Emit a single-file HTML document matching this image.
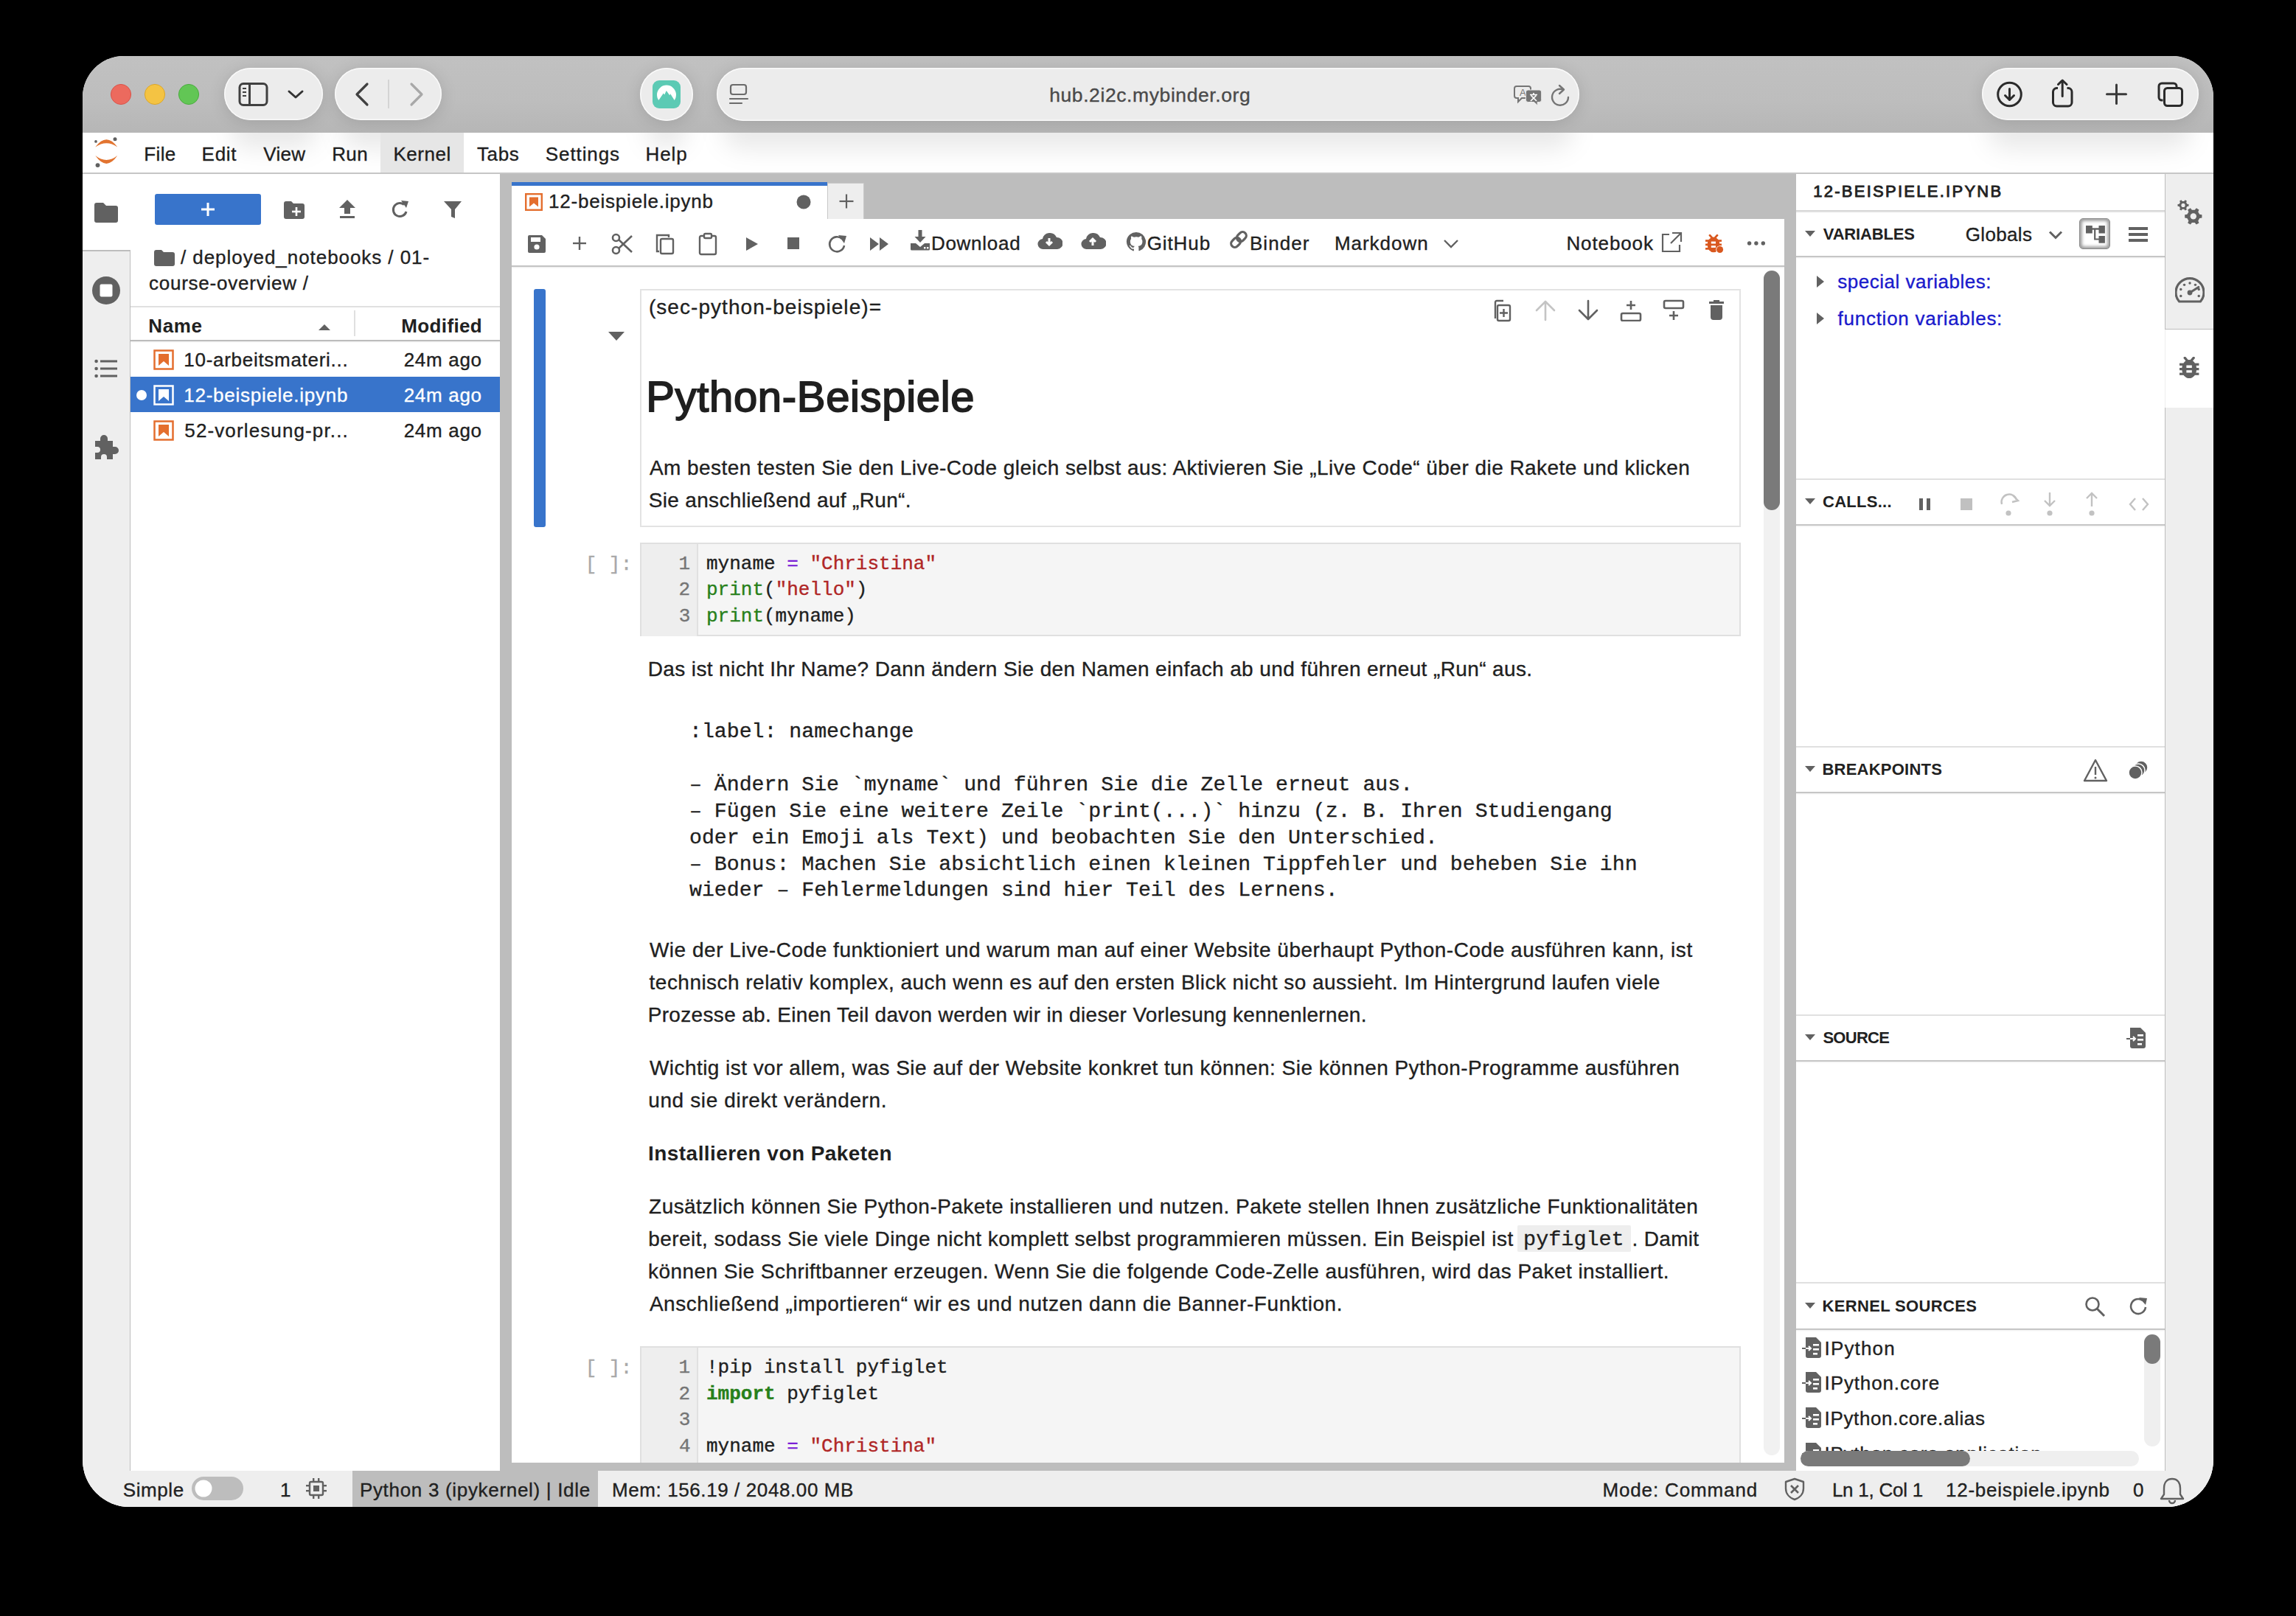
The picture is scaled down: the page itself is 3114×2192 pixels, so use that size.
<!DOCTYPE html><html><head><meta charset="utf-8"><style>
html,body{margin:0;padding:0;}
body{width:3114px;height:2192px;background:#000;position:relative;overflow:hidden;font-family:"Liberation Sans",sans-serif;}
.t{position:absolute;white-space:pre;-webkit-text-stroke:0.35px currentColor;}
.r{position:absolute;display:block;}
#win{position:absolute;left:0;top:0;width:3114px;height:2192px;clip-path:inset(76px 112px 148px 112px round 56px 56px 64px 64px);background:#fff;}
</style></head><body><div id="win"><div class="r" style="left:112px;top:76px;width:2890px;height:104px;background:linear-gradient(180deg,#c1c1c1 0%,#bdbdbd 60%,#b6b6b6 100%);"></div><svg class="r" style="left:149px;top:113px;" width="30" height="30" viewBox="0 0 30 30"><circle cx="15" cy="15" r="13.6" fill="#ec6a5e" stroke="#d9534a" stroke-width="1"/></svg><svg class="r" style="left:195px;top:113px;" width="30" height="30" viewBox="0 0 30 30"><circle cx="15" cy="15" r="13.6" fill="#f4c343" stroke="#dba629" stroke-width="1"/></svg><svg class="r" style="left:241px;top:113px;" width="30" height="30" viewBox="0 0 30 30"><circle cx="15" cy="15" r="13.6" fill="#62c655" stroke="#4aac3e" stroke-width="1"/></svg><div class="r" style="left:304px;top:92px;width:134px;height:71px;background:none;background:#ececec;border-radius:36px;box-shadow:0 0 0 1.5px rgba(255,255,255,0.75) inset, 0 3px 22px rgba(0,0,0,0.13);"></div><div class="r" style="left:454px;top:92px;width:145px;height:71px;background:none;background:#ececec;border-radius:36px;box-shadow:0 0 0 1.5px rgba(255,255,255,0.75) inset, 0 3px 22px rgba(0,0,0,0.13);"></div><div class="r" style="left:868px;top:92px;width:72px;height:72px;background:none;background:#ececec;border-radius:36px;box-shadow:0 0 0 1.5px rgba(255,255,255,0.75) inset, 0 3px 22px rgba(0,0,0,0.13);border-radius:50%;"></div><div class="r" style="left:972px;top:92px;width:1170px;height:72px;background:none;background:#ececec;border-radius:36px;box-shadow:0 0 0 1.5px rgba(255,255,255,0.75) inset, 0 3px 22px rgba(0,0,0,0.13);"></div><div class="r" style="left:2688px;top:92px;width:294px;height:71px;background:none;background:#ececec;border-radius:36px;box-shadow:0 0 0 1.5px rgba(255,255,255,0.75) inset, 0 3px 22px rgba(0,0,0,0.13);"></div><svg class="r" style="left:322px;top:111px;" width="42" height="34" viewBox="0 0 42 34"><rect x="3" y="2.5" width="37" height="29" rx="5" fill="none" stroke="#404040" stroke-width="3"/><line x1="16.5" y1="3" x2="16.5" y2="31" stroke="#404040" stroke-width="3"/><line x1="7" y1="9" x2="12" y2="9" stroke="#404040" stroke-width="2"/><line x1="7" y1="14" x2="12" y2="14" stroke="#404040" stroke-width="2"/><line x1="7" y1="19" x2="12" y2="19" stroke="#404040" stroke-width="2"/></svg><svg class="r" style="left:388px;top:119px;" width="26" height="18" viewBox="0 0 26 18"><polyline points="4,5 13,13 22,5" fill="none" stroke="#333" stroke-width="3" stroke-linecap="round" stroke-linejoin="round"/></svg><svg class="r" style="left:476px;top:110px;" width="30" height="36" viewBox="0 0 30 36"><polyline points="22,4 8,18 22,32" fill="none" stroke="#404040" stroke-width="3.2" stroke-linecap="round" stroke-linejoin="round"/></svg><div class="r" style="left:526px;top:108px;width:2px;height:39px;background:#d4d4d4;"></div><svg class="r" style="left:550px;top:110px;" width="30" height="36" viewBox="0 0 30 36"><polyline points="8,4 22,18 8,32" fill="none" stroke="#a8a8a8" stroke-width="3.2" stroke-linecap="round" stroke-linejoin="round"/></svg><svg class="r" style="left:884px;top:108px;" width="40" height="40" viewBox="0 0 40 40"><rect x="1" y="1" width="38" height="38" rx="9" fill="#5ccab4"/><path d="M9.3 28 A13 13 0 1 1 30.7 28 L25.2 19.2 L24.2 21.2 L19.8 15 L17.2 20.6 L15.8 18.6 Z" fill="#fff"/></svg><svg class="r" style="left:988px;top:113px;" width="28" height="30" viewBox="0 0 28 30"><rect x="3" y="2" width="21" height="13" rx="3" fill="none" stroke="#6b6b6b" stroke-width="2.2"/><line x1="2" y1="21" x2="26" y2="21" stroke="#6b6b6b" stroke-width="2.2" stroke-linecap="round"/><line x1="2" y1="27" x2="18" y2="27" stroke="#6b6b6b" stroke-width="2.2" stroke-linecap="round"/></svg><span id="t1" class="t " style="left:1423.2px;top:116.1px;font-size:26.5px;line-height:26.5px;color:#4a4a4a;letter-spacing:0.590px;">hub.2i2c.mybinder.org</span><svg class="r" style="left:2053px;top:114px;" width="46" height="36" viewBox="0 0 46 36"><path d="M4 3 h16 a3 3 0 0 1 3 3 v10 a3 3 0 0 1 -3 3 h-9 l-5 5 v-5 h-2 a3 3 0 0 1 -3 -3 v-10 a3 3 0 0 1 3 -3z" fill="none" stroke="#757575" stroke-width="2"/><text x="8" y="16" font-size="13" fill="#757575" font-family="Liberation Sans">A</text><path d="M19.4 8 h15.3 a3 3 0 0 1 3 3 v10.5 a3 3 0 0 1 -3 3 h-2.5 v4.5 l-4.5 -4.5 h-8.3 a3 3 0 0 1 -3 -3 v-10.5 a3 3 0 0 1 3 -3z" fill="#757575" stroke="#ececec" stroke-width="1"/><path d="M22 14.5 H32 M27 12 V14 M23.5 15.5 L31 23 M30.5 15.5 L23 23" stroke="#fff" stroke-width="1.7" fill="none"/></svg><svg class="r" style="left:2101px;top:112px;" width="32" height="38" viewBox="0 0 32 38"><path d="M26 20 A11 11 0 1 1 19 9.5" fill="none" stroke="#757575" stroke-width="2.4" stroke-linecap="round"/><polyline points="14,4 20,9.5 14,15" fill="none" stroke="#757575" stroke-width="2.4" stroke-linecap="round" stroke-linejoin="round"/></svg><svg class="r" style="left:2707px;top:110px;" width="38" height="38" viewBox="0 0 38 38"><circle cx="18.5" cy="18" r="15.8" fill="none" stroke="#2b2b2b" stroke-width="3"/><line x1="18.5" y1="10.5" x2="18.5" y2="25" stroke="#2b2b2b" stroke-width="3" stroke-linecap="round"/><polyline points="12.5,19.5 18.5,25.5 24.5,19.5" fill="none" stroke="#2b2b2b" stroke-width="3" stroke-linecap="round" stroke-linejoin="round"/></svg><svg class="r" style="left:2780px;top:106px;" width="34" height="42" viewBox="0 0 34 42"><path d="M11 13.5 H9.5 a5 5 0 0 0 -5 5 V33 a5 5 0 0 0 5 5 H25 a5 5 0 0 0 5 -5 V18.5 a5 5 0 0 0 -5 -5 H23.5" fill="none" stroke="#2b2b2b" stroke-width="3"/><line x1="17.2" y1="3.5" x2="17.2" y2="24.5" stroke="#2b2b2b" stroke-width="3" stroke-linecap="round"/><polyline points="11.5,8.5 17.2,3 23,8.5" fill="none" stroke="#2b2b2b" stroke-width="3" stroke-linecap="round" stroke-linejoin="round"/></svg><svg class="r" style="left:2855px;top:112px;" width="32" height="32" viewBox="0 0 32 32"><line x1="15.5" y1="3" x2="15.5" y2="28.5" stroke="#3a3a3a" stroke-width="3" stroke-linecap="round"/><line x1="2.5" y1="15.8" x2="28.5" y2="15.8" stroke="#3a3a3a" stroke-width="3" stroke-linecap="round"/></svg><svg class="r" style="left:2924px;top:109px;" width="40" height="38" viewBox="0 0 40 38"><path d="M9.5 27 h-1.5 a4 4 0 0 1 -4 -4 v-15 a4 4 0 0 1 4 -4 h16 a4 4 0 0 1 4 4 v1" fill="none" stroke="#2b2b2b" stroke-width="3"/><rect x="11.5" y="10.5" width="24" height="24" rx="4" fill="none" stroke="#2b2b2b" stroke-width="3"/></svg><div class="r" style="left:112px;top:180px;width:2890px;height:55px;background:#fff;overflow:hidden;"><div class="r" style="left:200px;top:-30px;width:118px;height:52px;background:rgba(0,0,0,0.085);filter:blur(16px);border-radius:30px;"></div><div class="r" style="left:350px;top:-30px;width:129px;height:52px;background:rgba(0,0,0,0.085);filter:blur(16px);border-radius:30px;"></div><div class="r" style="left:764px;top:-30px;width:56px;height:52px;background:rgba(0,0,0,0.085);filter:blur(16px);border-radius:30px;"></div><div class="r" style="left:868px;top:-30px;width:1154px;height:52px;background:rgba(0,0,0,0.085);filter:blur(16px);border-radius:30px;"></div><div class="r" style="left:2584px;top:-30px;width:276px;height:52px;background:rgba(0,0,0,0.085);filter:blur(16px);border-radius:30px;"></div></div><div class="r" style="left:516px;top:180px;width:113px;height:54px;background:#e6e6e6;"></div><div class="r" style="left:112px;top:234px;width:2890px;height:2px;background:#c6c6c6;"></div><svg class="r" style="left:124px;top:184px;" width="40" height="46" viewBox="0 0 40 46"><path d="M5.3 15.6 Q20.4 -5 35.3 15.6 Q20.4 4.8 5.3 15.6Z" fill="#e27430"/><path d="M5.3 27.1 Q20.4 48.7 35.3 27.1 Q20.4 38.9 5.3 27.1Z" fill="#e27430"/><circle cx="32" cy="4.65" r="2.5" fill="#616161"/><circle cx="6" cy="7.9" r="1.85" fill="#616161"/><circle cx="8.5" cy="40.1" r="2.94" fill="#616161"/></svg><span id="t2" class="t " style="left:195.3px;top:196.0px;font-size:26px;line-height:26px;color:#1e1e1e;letter-spacing:0.361px;">File</span><span id="t3" class="t " style="left:273.6px;top:196.0px;font-size:26px;line-height:26px;color:#1e1e1e;letter-spacing:0.704px;">Edit</span><span id="t4" class="t " style="left:357.3px;top:196.0px;font-size:26px;line-height:26px;color:#1e1e1e;letter-spacing:0.320px;">View</span><span id="t5" class="t " style="left:450.2px;top:196.0px;font-size:26px;line-height:26px;color:#1e1e1e;letter-spacing:0.409px;">Run</span><span id="t6" class="t " style="left:533.4px;top:196.0px;font-size:26px;line-height:26px;color:#1e1e1e;letter-spacing:0.543px;">Kernel</span><span id="t7" class="t " style="left:646.9px;top:196.0px;font-size:26px;line-height:26px;color:#1e1e1e;letter-spacing:0.667px;">Tabs</span><span id="t8" class="t " style="left:739.8px;top:196.0px;font-size:26px;line-height:26px;color:#1e1e1e;letter-spacing:0.910px;">Settings</span><span id="t9" class="t " style="left:875.5px;top:196.0px;font-size:26px;line-height:26px;color:#1e1e1e;letter-spacing:0.913px;">Help</span><div class="r" style="left:112px;top:236px;width:2890px;height:1759px;background:#bdbdbd;"></div><div class="r" style="left:112px;top:236px;width:65px;height:1759px;background:#eeeeee;"></div><div class="r" style="left:112px;top:236px;width:65px;height:104px;background:#ffffff;"></div><div class="r" style="left:176px;top:340px;width:2px;height:1655px;background:#bdbdbd;"></div><div class="r" style="left:112px;top:339px;width:65px;height:2px;background:#bdbdbd;"></div><div class="r" style="left:177px;top:236px;width:501px;height:1759px;background:#ffffff;"></div><div class="r" style="left:694px;top:297px;width:1726px;height:1687px;background:#ffffff;"></div><div class="r" style="left:2436px;top:236px;width:500px;height:1759px;background:#ffffff;"></div><div class="r" style="left:2936px;top:236px;width:66px;height:1759px;background:#eeeeee;"></div><div class="r" style="left:2936px;top:236px;width:1px;height:211px;background:#bdbdbd;"></div><div class="r" style="left:2936px;top:553px;width:1px;height:1442px;background:#bdbdbd;"></div><div class="r" style="left:2937px;top:447px;width:65px;height:106px;background:#ffffff;"></div><div class="r" style="left:112px;top:1995px;width:2890px;height:49px;background:#eeeeee;"></div><div class="r" style="left:478px;top:1995px;width:333px;height:49px;background:#bdbdbd;"></div><svg class="r" style="left:126px;top:272px;" width="36" height="32" viewBox="0 0 36 32"><path d="M2 6 a3 3 0 0 1 3 -3 h9 l4 4 h13 a3 3 0 0 1 3 3 v17 a3 3 0 0 1 -3 3 h-26 a3 3 0 0 1 -3 -3z" fill="#616161"/></svg><svg class="r" style="left:124px;top:374px;" width="40" height="40" viewBox="0 0 40 40"><circle cx="20" cy="20" r="19" fill="#616161"/><rect x="11.5" y="11.5" width="17" height="17" rx="2" fill="#fff"/></svg><svg class="r" style="left:126px;top:484px;" width="36" height="32" viewBox="0 0 36 32"><circle cx="4.6" cy="6.0" r="2.3" fill="#616161"/><rect x="10" y="4.5" width="23" height="3" fill="#616161"/><circle cx="4.6" cy="16.0" r="2.3" fill="#616161"/><rect x="10" y="14.5" width="23" height="3" fill="#616161"/><circle cx="4.6" cy="26.0" r="2.3" fill="#616161"/><rect x="10" y="24.5" width="23" height="3" fill="#616161"/></svg><svg class="r" style="left:124px;top:584px;" width="40" height="40" viewBox="0 0 40 40"><path d="M5 14 h7 v-3 a5 5 0 0 1 10 0 v3 h7 v8 h3 a5 5 0 0 1 0 10 h-3 v7 h-8 v-3 a4 4 0 0 0 -8 0 v3 h-8 v-9 h3 a4 4 0 0 0 0 -8 h-3z" fill="#616161"/></svg><div class="r" style="left:210px;top:263px;width:144px;height:42px;background:#3874cb;border-radius:3px;"></div><svg class="r" style="left:268px;top:270px;" width="28" height="28" viewBox="0 0 28 28"><line x1="14" y1="5" x2="14" y2="23" stroke="#fff" stroke-width="3"/><line x1="5" y1="14" x2="23" y2="14" stroke="#fff" stroke-width="3"/></svg><svg class="r" style="left:384px;top:272px;" width="30" height="26" viewBox="0 0 30 26"><path d="M1 4 a3 3 0 0 1 3 -3 h7 l3 3 h12 a3 3 0 0 1 3 3 v15 a3 3 0 0 1 -3 3 h-22 a3 3 0 0 1 -3 -3z" fill="#616161"/><line x1="18" y1="9" x2="18" y2="21" stroke="#fff" stroke-width="2.6"/><line x1="12" y1="15" x2="24" y2="15" stroke="#fff" stroke-width="2.6"/></svg><svg class="r" style="left:458px;top:270px;" width="26" height="28" viewBox="0 0 26 28"><path d="M13 1 L24 12 H17 V20 H9 V12 H2z" fill="#616161"/><rect x="3" y="23" width="20" height="3" fill="#616161"/></svg><svg class="r" style="left:529px;top:270px;" width="28" height="28" viewBox="0 0 28 28"><path d="M22 17 A9 9 0 1 1 19 7.5" fill="none" stroke="#616161" stroke-width="3"/><path d="M15 2 L25 3 L22 12z" fill="#616161"/></svg><svg class="r" style="left:600px;top:270px;" width="28" height="28" viewBox="0 0 28 28"><path d="M2 3 H26 L17 14 V26 L12 24 V14z" fill="#616161"/></svg><svg class="r" style="left:208px;top:338px;" width="30" height="24" viewBox="0 0 30 24"><path d="M1 4 a3 3 0 0 1 3 -3 h7 l3 3 h12 a3 3 0 0 1 3 3 v13 a3 3 0 0 1 -3 3 h-22 a3 3 0 0 1 -3 -3z" fill="#616161"/></svg><span id="t10" class="t " style="left:245.0px;top:336.0px;font-size:26px;line-height:26px;color:#212121;letter-spacing:0.939px;">/ deployed_notebooks / 01-</span><span id="t11" class="t " style="left:201.9px;top:371.0px;font-size:26px;line-height:26px;color:#212121;letter-spacing:0.773px;">course-overview /</span><div class="r" style="left:177px;top:415px;width:501px;height:2px;background:#e0e0e0;"></div><span id="t12" class="t " style="left:201.3px;top:429.0px;font-size:26px;line-height:26px;color:#212121;font-weight:700;-webkit-text-stroke:0;letter-spacing:0.600px;">Name</span><svg class="r" style="left:430px;top:438px;" width="20" height="12" viewBox="0 0 20 12"><path d="M2 10 L10 2 L18 10z" fill="#616161"/></svg><div class="r" style="left:480px;top:421px;width:2px;height:35px;background:#e0e0e0;"></div><span id="t13" class="t " style="left:544.3px;top:429.0px;font-size:26px;line-height:26px;color:#212121;font-weight:700;-webkit-text-stroke:0;letter-spacing:0.368px;">Modified</span><div class="r" style="left:177px;top:461px;width:501px;height:2px;background:#bcbcbc;box-shadow:0 1px 2px rgba(0,0,0,0.08);"></div><svg class="r" style="left:208px;top:474px;" width="28" height="28" viewBox="0 0 28 28"><rect x="1.5" y="1.5" width="25" height="25" fill="none" stroke="#e46e2e" stroke-width="2.5"/><path d="M7 6 H21 V22 L14 16 L7 22z" fill="#e46e2e"/></svg><span id="t14" class="t " style="left:249.3px;top:475.0px;font-size:26px;line-height:26px;color:#212121;letter-spacing:0.712px;">10-arbeitsmateri...</span><span id="t15" class="t " style="left:547.7px;top:475.0px;font-size:26px;line-height:26px;color:#212121;letter-spacing:0.702px;">24m ago</span><div class="r" style="left:177px;top:511px;width:501px;height:48px;background:#3874cb;"></div><svg class="r" style="left:183px;top:527px;" width="18" height="18" viewBox="0 0 18 18"><circle cx="9" cy="9" r="7" fill="#fff"/></svg><svg class="r" style="left:208px;top:522px;" width="28" height="28" viewBox="0 0 28 28"><rect x="1.5" y="1.5" width="25" height="25" fill="none" stroke="#fff" stroke-width="2.5"/><path d="M7 6 H21 V22 L14 16 L7 22z" fill="#fff"/></svg><span id="t16" class="t " style="left:249.3px;top:523.0px;font-size:26px;line-height:26px;color:#ffffff;letter-spacing:0.734px;">12-beispiele.ipynb</span><span id="t17" class="t " style="left:547.7px;top:523.0px;font-size:26px;line-height:26px;color:#ffffff;letter-spacing:0.702px;">24m ago</span><svg class="r" style="left:208px;top:570px;" width="28" height="28" viewBox="0 0 28 28"><rect x="1.5" y="1.5" width="25" height="25" fill="none" stroke="#e46e2e" stroke-width="2.5"/><path d="M7 6 H21 V22 L14 16 L7 22z" fill="#e46e2e"/></svg><span id="t18" class="t " style="left:250.3px;top:571.0px;font-size:26px;line-height:26px;color:#212121;letter-spacing:1.123px;">52-vorlesung-pr...</span><span id="t19" class="t " style="left:547.7px;top:571.0px;font-size:26px;line-height:26px;color:#212121;letter-spacing:0.702px;">24m ago</span><div class="r" style="left:694px;top:247px;width:428px;height:50px;background:#ffffff;"></div><div class="r" style="left:694px;top:247px;width:428px;height:5px;background:#3874cb;"></div><svg class="r" style="left:712px;top:262px;" width="24" height="24" viewBox="0 0 24 24"><rect x="1.2" y="1.2" width="21.6" height="21.6" fill="none" stroke="#e46e2e" stroke-width="2.4"/><path d="M6 5.5 H18 V18.5 L12 13.5 L6 18.5z" fill="#e46e2e"/></svg><span id="t20" class="t " style="left:744.0px;top:260.0px;font-size:26px;line-height:26px;color:#212121;letter-spacing:0.793px;">12-beispiele.ipynb</span><svg class="r" style="left:1080px;top:264px;" width="20" height="20" viewBox="0 0 20 20"><circle cx="10" cy="10" r="9.5" fill="#616161"/></svg><div class="r" style="left:1122px;top:248px;width:50px;height:49px;background:#eeeeee;box-sizing:border-box;border:1.5px solid #c8c8c8;border-bottom:none;"></div><svg class="r" style="left:1138px;top:263px;" width="20" height="20" viewBox="0 0 20 20"><line x1="10" y1="0.5" x2="10" y2="19.5" stroke="#616161" stroke-width="2.2"/><line x1="0.5" y1="10" x2="19.5" y2="10" stroke="#616161" stroke-width="2.2"/></svg><div class="r" style="left:694px;top:297px;width:1726px;height:62px;background:#ffffff;"></div><div class="r" style="left:694px;top:360px;width:1726px;height:2px;background:#c4c4c4;box-shadow:0 1px 2px rgba(0,0,0,0.10);"></div><svg class="r" style="left:714px;top:317px;" width="28" height="28" viewBox="0 0 28 28"><path d="M2 4 a2 2 0 0 1 2 -2 h17 l5 5 v17 a2 2 0 0 1 -2 2 h-20 a2 2 0 0 1 -2 -2z" fill="#616161"/><rect x="6" y="5" width="13" height="6" fill="#fff"/><circle cx="14" cy="18" r="3.6" fill="#fff"/></svg><svg class="r" style="left:776px;top:320px;" width="20" height="20" viewBox="0 0 20 20"><line x1="10" y1="1" x2="10" y2="19" stroke="#616161" stroke-width="2.4"/><line x1="1" y1="10" x2="19" y2="10" stroke="#616161" stroke-width="2.4"/></svg><svg class="r" style="left:829px;top:316px;" width="30" height="30" viewBox="0 0 30 30"><circle cx="6.5" cy="6.5" r="4.5" fill="none" stroke="#616161" stroke-width="2.6"/><circle cx="6.5" cy="23.5" r="4.5" fill="none" stroke="#616161" stroke-width="2.6"/><line x1="10" y1="9" x2="28" y2="26" stroke="#616161" stroke-width="2.6"/><line x1="10" y1="21" x2="28" y2="4" stroke="#616161" stroke-width="2.6"/></svg><svg class="r" style="left:888px;top:316px;" width="28" height="30" viewBox="0 0 28 30"><path d="M6 25 H3 V3 H19 V6" fill="none" stroke="#616161" stroke-width="2.4"/><rect x="8" y="8" width="17" height="20" rx="2" fill="none" stroke="#616161" stroke-width="2.4"/></svg><svg class="r" style="left:946px;top:315px;" width="28" height="32" viewBox="0 0 28 32"><rect x="3" y="5" width="22" height="25" rx="2" fill="none" stroke="#616161" stroke-width="2.4"/><rect x="9" y="2" width="10" height="6" rx="1.5" fill="#fff" stroke="#616161" stroke-width="2.4"/></svg><svg class="r" style="left:1010px;top:320px;" width="20" height="22" viewBox="0 0 20 22"><path d="M2 2 L18 11 L2 20z" fill="#616161"/></svg><svg class="r" style="left:1067px;top:321px;" width="18" height="18" viewBox="0 0 18 18"><rect x="1" y="1" width="16" height="16" fill="#616161"/></svg><svg class="r" style="left:1121px;top:316px;" width="30" height="30" viewBox="0 0 30 30"><path d="M24 17 A10 10 0 1 1 21 8" fill="none" stroke="#616161" stroke-width="2.6"/><path d="M16 3 L27 4 L24 14z" fill="#616161"/></svg><svg class="r" style="left:1179px;top:320px;" width="28" height="22" viewBox="0 0 28 22"><path d="M1 2 L13 11 L1 20z M14 2 L26 11 L14 20z" fill="#616161"/></svg><svg class="r" style="left:1233px;top:310px;" width="30" height="30" viewBox="0 0 30 30"><path d="M12.5 2 H17.5 V11 H22.5 L15 19 L7.5 11 H12.5z" fill="#616161"/><path d="M2 20 H9 L15 25 L21 20 H28 V28 a1.5 1.5 0 0 1 -1.5 1.5 H3.5 a1.5 1.5 0 0 1 -1.5 -1.5z" fill="#616161"/><rect x="20" y="25" width="2.4" height="2.4" fill="#fff"/><rect x="24" y="25" width="2.4" height="2.4" fill="#fff"/></svg><span id="t21" class="t " style="left:1262.9px;top:317.0px;font-size:26px;line-height:26px;color:#212121;letter-spacing:0.738px;">Download</span><svg class="r" style="left:1407px;top:314px;" width="34" height="26" viewBox="0 0 34 26"><path d="M8 24 a7 7 0 0 1 -1 -14 a10 10 0 0 1 19 -2 a8 8 0 0 1 1 16z" fill="#616161"/><path d="M16 9 V18 M12 14 L16 18 L20 14" fill="none" stroke="#fff" stroke-width="3"/></svg><svg class="r" style="left:1466px;top:314px;" width="34" height="26" viewBox="0 0 34 26"><path d="M8 24 a7 7 0 0 1 -1 -14 a10 10 0 0 1 19 -2 a8 8 0 0 1 1 16z" fill="#616161"/><path d="M16 19 V10 M12 14 L16 10 L20 14" fill="none" stroke="#fff" stroke-width="3"/></svg><svg class="r" style="left:1527px;top:314px;" width="28" height="28" viewBox="0 0 28 28"><path d="M14 1 a13 13 0 0 0 -4 25.4 c.6.1.9-.3.9-.6 v-2.3 c-3.6.8-4.4-1.7-4.4-1.7 c-.6-1.5-1.4-1.9-1.4-1.9 c-1.2-.8.1-.8.1-.8 c1.3.1 2 1.3 2 1.3 c1.2 2 3.1 1.4 3.8 1.1 c.1-.8.5-1.4.8-1.7 c-2.9-.3-5.9-1.4-5.9-6.4 c0-1.4.5-2.6 1.3-3.5 c-.1-.3-.6-1.7.1-3.5 c0 0 1.1-.3 3.6 1.3 a12 12 0 0 1 6.5 0 c2.5-1.7 3.6-1.3 3.6-1.3 c.7 1.8.3 3.1.1 3.5 c.8.9 1.3 2.1 1.3 3.5 c0 5-3 6.1-5.9 6.4 c.5.4.9 1.2.9 2.4 v3.5 c0 .3.2.7.9.6 A13 13 0 0 0 14 1z" fill="#616161"/></svg><span id="t22" class="t " style="left:1555.7px;top:317.0px;font-size:26px;line-height:26px;color:#212121;letter-spacing:0.896px;">GitHub</span><svg class="r" style="left:1665px;top:310px;" width="30" height="30" viewBox="0 0 30 30"><g transform="rotate(-45 15 15)" fill="none" stroke="#616161" stroke-width="3.2"><rect x="2.5" y="10" width="14" height="10" rx="5"/><rect x="13.5" y="10" width="14" height="10" rx="5"/></g></svg><span id="t23" class="t " style="left:1694.9px;top:317.0px;font-size:26px;line-height:26px;color:#212121;letter-spacing:1.082px;">Binder</span><span id="t24" class="t " style="left:1809.9px;top:317.0px;font-size:26px;line-height:26px;color:#212121;letter-spacing:0.983px;">Markdown</span><svg class="r" style="left:1957px;top:324px;" width="22" height="14" viewBox="0 0 22 14"><polyline points="2,2 11,11 20,2" fill="none" stroke="#616161" stroke-width="2.4"/></svg><span id="t25" class="t " style="left:2124.4px;top:317.0px;font-size:26px;line-height:26px;color:#212121;letter-spacing:0.897px;">Notebook</span><svg class="r" style="left:2252px;top:314px;" width="30" height="30" viewBox="0 0 30 30"><path d="M12 4 H3 V27 H26 V18" fill="none" stroke="#616161" stroke-width="2.2"/><path d="M16 2 H28 V14 M28 2 L14 16" fill="none" stroke="#616161" stroke-width="2.2"/></svg><svg class="r" style="left:2313px;top:318px;" width="26" height="27" viewBox="0 0 26 27"><g transform="scale(1.000)"><path d="M6 1.2 L8.6 4.2 M16 1.2 L13.4 4.2" stroke="#d9581f" stroke-width="2.8" stroke-linecap="round"/><ellipse cx="11" cy="13.8" rx="8.4" ry="10.4" fill="#d9581f"/><rect x="0" y="7.2" width="5" height="2.7" fill="#d9581f"/><rect x="17" y="7.2" width="5" height="2.7" fill="#d9581f"/><rect x="0" y="12.5" width="5" height="2.7" fill="#d9581f"/><rect x="17" y="12.5" width="5" height="2.7" fill="#d9581f"/><rect x="0" y="18.0" width="5" height="2.7" fill="#d9581f"/><rect x="17" y="18.0" width="5" height="2.7" fill="#d9581f"/><rect x="7.8" y="9.6" width="6.2" height="2.9" fill="#fff"/><rect x="7.8" y="15.2" width="6.2" height="2.7" fill="#fff"/><circle cx="19.6" cy="20.5" r="5.3" fill="#fff"/><circle cx="19.6" cy="20.5" r="4.5" fill="#d9581f"/></g></svg><svg class="r" style="left:2368px;top:324px;" width="28" height="12" viewBox="0 0 28 12"><circle cx="4.6" cy="6" r="2.7" fill="#616161"/><circle cx="13.9" cy="6" r="2.7" fill="#616161"/><circle cx="23.3" cy="6" r="2.7" fill="#616161"/></svg><div class="r" style="left:724px;top:392px;width:16px;height:323px;background:#3874cb;border-radius:3px;"></div><div class="r" style="left:868px;top:392px;width:1493px;height:323px;background:transparent;box-sizing:border-box;border:2px solid #e3e3e3;"></div><svg class="r" style="left:824px;top:448px;" width="24" height="16" viewBox="0 0 24 16"><path d="M1 2 H23 L12 14z" fill="#616161"/></svg><span id="t26" class="t " style="left:879.9px;top:403.3px;font-size:28px;line-height:28px;color:#1f1f1f;letter-spacing:1.059px;">(sec-python-beispiele)=</span><span id="t27" class="t " style="left:876.2px;top:508.5px;font-size:58px;line-height:58px;color:#1f1f1f;letter-spacing:0.671px;-webkit-text-stroke:1.8px currentColor;">Python-Beispiele</span><span id="t28" class="t " style="left:880.9px;top:621.3px;font-size:28px;line-height:28px;color:#1f1f1f;letter-spacing:0.458px;">Am besten testen Sie den Live-Code gleich selbst aus: Aktivieren Sie „Live Code“ über die Rakete und klicken</span><span id="t29" class="t " style="left:879.7px;top:664.8px;font-size:28px;line-height:28px;color:#1f1f1f;letter-spacing:0.337px;">Sie anschließend auf „Run“.</span><svg class="r" style="left:2024px;top:406px;" width="28" height="32" viewBox="0 0 28 32"><path d="M4 26 V4 a2 2 0 0 1 2 -2 H15" fill="none" stroke="#616161" stroke-width="2.4"/><rect x="7" y="8" width="17" height="21" rx="2" fill="none" stroke="#616161" stroke-width="2.4"/><path d="M15.5 13 V24 M10 18.5 H21" stroke="#616161" stroke-width="2.4"/></svg><svg class="r" style="left:2081px;top:406px;" width="30" height="30" viewBox="0 0 30 30"><path d="M15 28 V4 M3 15 L15 3 L27 15" fill="none" stroke="#c4c4c4" stroke-width="2.6" stroke-linecap="round" stroke-linejoin="round"/></svg><svg class="r" style="left:2139px;top:406px;" width="30" height="30" viewBox="0 0 30 30"><path d="M15 2 V26 M3 15 L15 27 L27 15" fill="none" stroke="#616161" stroke-width="2.6" stroke-linecap="round" stroke-linejoin="round"/></svg><svg class="r" style="left:2197px;top:406px;" width="30" height="30" viewBox="0 0 30 30"><path d="M15 2 V14 M9 8 H21" stroke="#616161" stroke-width="2.6"/><rect x="2" y="19" width="26" height="10" rx="2" fill="none" stroke="#616161" stroke-width="2.6"/></svg><svg class="r" style="left:2255px;top:406px;" width="30" height="30" viewBox="0 0 30 30"><rect x="2" y="2" width="26" height="10" rx="2" fill="none" stroke="#616161" stroke-width="2.6"/><path d="M15 16 V28 M9 22 H21" stroke="#616161" stroke-width="2.6"/></svg><svg class="r" style="left:2318px;top:407px;" width="20" height="28" viewBox="0 0 20 28"><rect x="0" y="2" width="20" height="3" fill="#616161"/><rect x="6" y="0" width="8" height="3" fill="#616161"/><path d="M2 7 H18 V23 a4 4 0 0 1 -4 4 H6 a4 4 0 0 1 -4 -4z" fill="#616161"/></svg><div class="r" style="left:868px;top:736px;width:1493px;height:127px;background:#f5f5f5;box-sizing:border-box;border:2px solid #e0e0e0;"></div><div class="r" style="left:870px;top:738px;width:75px;height:125px;background:#eeeeee;border-right:2px solid #e0e0e0;"></div><span id="t30" class="t " style="left:793.8px;top:752.6px;font-size:26px;line-height:26px;color:#a8a8a8;font-family:'Liberation Mono', monospace;letter-spacing:0.368px;">[ ]:</span><span id="t31" class="t " style="left:920.5px;top:751.6px;font-size:26px;line-height:26px;color:#757575;font-family:'Liberation Mono', monospace;">1</span><span id="t32" class="t " style="left:920.6px;top:787.4px;font-size:26px;line-height:26px;color:#757575;font-family:'Liberation Mono', monospace;">2</span><span id="t33" class="t " style="left:920.8px;top:823.2px;font-size:26px;line-height:26px;color:#757575;font-family:'Liberation Mono', monospace;">3</span><span class="t" style="left:958.0px;top:751.6px;font-size:26px;line-height:26px;color:#1f1f1f;font-family:'Liberation Mono', monospace;">myname <span style="color:#7a1fd6">=</span> <span style="color:#b02626">"Christina"</span></span><span class="t" style="left:958.0px;top:787.4px;font-size:26px;line-height:26px;color:#1f1f1f;font-family:'Liberation Mono', monospace;"><span style="color:#27801a">print</span>(<span style="color:#b02626">"hello"</span>)</span><span class="t" style="left:958.0px;top:823.2px;font-size:26px;line-height:26px;color:#1f1f1f;font-family:'Liberation Mono', monospace;"><span style="color:#27801a">print</span>(myname)</span><span id="t34" class="t " style="left:878.7px;top:894.3px;font-size:28px;line-height:28px;color:#1f1f1f;letter-spacing:0.382px;">Das ist nicht Ihr Name? Dann ändern Sie den Namen einfach ab und führen erneut „Run“ aus.</span><span id="t35" class="t " style="left:935.0px;top:979.0px;font-size:28.2px;line-height:28.2px;color:#1f1f1f;font-family:'Liberation Mono', monospace;">:label: namechange</span><span id="t36" class="t " style="left:935.0px;top:1050.8px;font-size:28.2px;line-height:28.2px;color:#1f1f1f;font-family:'Liberation Mono', monospace;">– Ändern Sie `myname` und führen Sie die Zelle erneut aus.</span><span id="t37" class="t " style="left:935.0px;top:1087.4px;font-size:28.2px;line-height:28.2px;color:#1f1f1f;font-family:'Liberation Mono', monospace;">– Fügen Sie eine weitere Zeile `print(...)` hinzu (z. B. Ihren Studiengang</span><span id="t38" class="t " style="left:935.0px;top:1122.9px;font-size:28.2px;line-height:28.2px;color:#1f1f1f;font-family:'Liberation Mono', monospace;">oder ein Emoji als Text) und beobachten Sie den Unterschied.</span><span id="t39" class="t " style="left:935.0px;top:1158.8px;font-size:28.2px;line-height:28.2px;color:#1f1f1f;font-family:'Liberation Mono', monospace;">– Bonus: Machen Sie absichtlich einen kleinen Tippfehler und beheben Sie ihn</span><span id="t40" class="t " style="left:935.0px;top:1194.4px;font-size:28.2px;line-height:28.2px;color:#1f1f1f;font-family:'Liberation Mono', monospace;">wieder – Fehlermeldungen sind hier Teil des Lernens.</span><span id="t41" class="t " style="left:880.9px;top:1274.7px;font-size:28px;line-height:28px;color:#1f1f1f;letter-spacing:0.529px;">Wie der Live-Code funktioniert und warum man auf einer Website überhaupt Python-Code ausführen kann, ist</span><span id="t42" class="t " style="left:880.6px;top:1318.5px;font-size:28px;line-height:28px;color:#1f1f1f;letter-spacing:0.465px;">technisch relativ komplex, auch wenn es auf den ersten Blick nicht so aussieht. Im Hintergrund laufen viele</span><span id="t43" class="t " style="left:878.7px;top:1363.3px;font-size:28px;line-height:28px;color:#1f1f1f;letter-spacing:0.333px;">Prozesse ab. Einen Teil davon werden wir in dieser Vorlesung kennenlernen.</span><span id="t44" class="t " style="left:880.9px;top:1435.1px;font-size:28px;line-height:28px;color:#1f1f1f;letter-spacing:0.452px;">Wichtig ist vor allem, was Sie auf der Website konkret tun können: Sie können Python-Programme ausführen</span><span id="t45" class="t " style="left:879.2px;top:1478.5px;font-size:28px;line-height:28px;color:#1f1f1f;letter-spacing:0.633px;">und sie direkt verändern.</span><span id="t46" class="t " style="left:880.1px;top:1622.5px;font-size:28px;line-height:28px;color:#1f1f1f;letter-spacing:0.443px;">Zusätzlich können Sie Python-Pakete installieren und nutzen. Pakete stellen Ihnen zusätzliche Funktionalitäten</span><span id="t47" class="t " style="left:879.1px;top:1711.1px;font-size:28px;line-height:28px;color:#1f1f1f;letter-spacing:0.442px;">können Sie Schriftbanner erzeugen. Wenn Sie die folgende Code-Zelle ausführen, wird das Paket installiert.</span><span id="t48" class="t " style="left:880.9px;top:1755.2px;font-size:28px;line-height:28px;color:#1f1f1f;letter-spacing:0.557px;">Anschließend „importieren“ wir es und nutzen dann die Banner-Funktion.</span><span id="t49" class="t " style="left:879.1px;top:1551.3px;font-size:28px;line-height:28px;color:#1f1f1f;font-weight:700;-webkit-text-stroke:0;letter-spacing:0.436px;">Installieren von Paketen</span><span id="t50" class="t " style="left:879.2px;top:1666.6px;font-size:28px;line-height:28px;color:#1f1f1f;letter-spacing:0.462px;">bereit, sodass Sie viele Dinge nicht komplett selbst programmieren müssen. Ein Beispiel ist</span><div class="r" style="left:2058px;top:1662px;width:154px;height:36px;background:#eeeeee;border-radius:2px;"></div><span id="t51" class="t " style="left:2066.1px;top:1667.5px;font-size:28.46px;line-height:28.46px;color:#1f1f1f;font-family:'Liberation Mono', monospace;">pyfiglet</span><span id="t52" class="t " style="left:2213.4px;top:1666.6px;font-size:28px;line-height:28px;color:#1f1f1f;letter-spacing:0.346px;">. Damit</span><div class="r" style="left:868px;top:1826px;width:1493px;height:200px;background:#f5f5f5;box-sizing:border-box;border:2px solid #e0e0e0;"></div><div class="r" style="left:870px;top:1828px;width:75px;height:198px;background:#eeeeee;border-right:2px solid #e0e0e0;"></div><span id="t53" class="t " style="left:793.8px;top:1842.7px;font-size:26px;line-height:26px;color:#a8a8a8;font-family:'Liberation Mono', monospace;letter-spacing:0.368px;">[ ]:</span><span id="t54" class="t " style="left:920.5px;top:1841.7px;font-size:26px;line-height:26px;color:#757575;font-family:'Liberation Mono', monospace;">1</span><span id="t55" class="t " style="left:920.6px;top:1877.5px;font-size:26px;line-height:26px;color:#757575;font-family:'Liberation Mono', monospace;">2</span><span id="t56" class="t " style="left:920.8px;top:1913.3px;font-size:26px;line-height:26px;color:#757575;font-family:'Liberation Mono', monospace;">3</span><span id="t57" class="t " style="left:921.1px;top:1949.1px;font-size:26px;line-height:26px;color:#757575;font-family:'Liberation Mono', monospace;">4</span><span class="t" style="left:958.0px;top:1841.7px;font-size:26px;line-height:26px;color:#1f1f1f;font-family:'Liberation Mono', monospace;">!pip install pyfiglet</span><span class="t" style="left:958.0px;top:1877.5px;font-size:26px;line-height:26px;color:#1f1f1f;font-family:'Liberation Mono', monospace;"><span style="color:#27801a;font-weight:700">import</span> pyfiglet</span><span class="t" style="left:958.0px;top:1913.3px;font-size:26px;line-height:26px;color:#1f1f1f;font-family:'Liberation Mono', monospace;"></span><span class="t" style="left:958.0px;top:1949.1px;font-size:26px;line-height:26px;color:#1f1f1f;font-family:'Liberation Mono', monospace;">myname <span style="color:#7a1fd6">=</span> <span style="color:#b02626">"Christina"</span></span><div class="r" style="left:2392px;top:367px;width:22px;height:1607px;background:#f1f1f1;border-radius:11px;"></div><div class="r" style="left:2392px;top:367px;width:22px;height:325px;background:#7a7a7a;border-radius:11px;"></div><div class="r" style="left:694px;top:1984px;width:1742px;height:11px;background:#bdbdbd;"></div><span id="t58" class="t " style="left:2459.3px;top:249.1px;font-size:22px;line-height:22px;color:#212121;letter-spacing:2.259px;-webkit-text-stroke:0.9px currentColor;">12-BEISPIELE.IPYNB</span><div class="r" style="left:2436px;top:285px;width:500px;height:2px;background:#d4d4d4;"></div><div class="r" style="left:2436px;top:286px;width:500px;height:2px;background:#e0e0e0;"></div><div class="r" style="left:2436px;top:347px;width:500px;height:2px;background:#c6c6c6;box-shadow:0 1px 2px rgba(0,0,0,0.08);"></div><svg class="r" style="left:2447px;top:311.5px;" width="16" height="10" viewBox="0 0 16 10"><path d="M1 1 H15 L8 9z" fill="#616161"/></svg><span id="t59" class="t " style="left:2472.8px;top:306.9px;font-size:22px;line-height:22px;color:#212121;font-weight:700;-webkit-text-stroke:0;letter-spacing:-0.186px;">VARIABLES</span><span id="t60" class="t " style="left:2665.7px;top:305.0px;font-size:26px;line-height:26px;color:#212121;letter-spacing:0.348px;">Globals</span><svg class="r" style="left:2778px;top:312px;" width="20" height="14" viewBox="0 0 20 14"><polyline points="2,2.5 10,10.5 18,2.5" fill="none" stroke="#616161" stroke-width="3"/></svg><div class="r" style="left:2820px;top:296px;width:42px;height:42px;background:#ffffff;box-sizing:border-box;border:1px solid #8a8a8a;border-radius:5px;box-shadow:inset 0 0 4px 2.5px rgba(0,0,0,0.42);"></div><svg class="r" style="left:2826px;top:302px;" width="32" height="32" viewBox="0 0 32 32"><rect x="3" y="4" width="8.8" height="10.5" fill="#616161"/><rect x="20.5" y="4" width="8.4" height="10.5" fill="#616161"/><rect x="20.5" y="18" width="8.4" height="9.7" fill="#616161"/><path d="M11 8.5 H21" stroke="#616161" stroke-width="2.4"/><path d="M15.2 9 V22.5 H21" fill="none" stroke="#616161" stroke-width="2.2"/></svg><svg class="r" style="left:2886px;top:307px;" width="28" height="22" viewBox="0 0 28 22"><rect x="1" y="1" width="26" height="4" fill="#616161"/><rect x="1" y="9" width="26" height="4" fill="#616161"/><rect x="1" y="17" width="26" height="4" fill="#616161"/></svg><svg class="r" style="left:2463px;top:373px;" width="12" height="18" viewBox="0 0 12 18"><path d="M1 1 L11 9 L1 17z" fill="#616161"/></svg><span id="t61" class="t " style="left:2492.3px;top:369.0px;font-size:26px;line-height:26px;color:#1a1acc;letter-spacing:0.509px;">special variables:</span><svg class="r" style="left:2463px;top:423px;" width="12" height="18" viewBox="0 0 12 18"><path d="M1 1 L11 9 L1 17z" fill="#616161"/></svg><span id="t62" class="t " style="left:2492.6px;top:419.0px;font-size:26px;line-height:26px;color:#1a1acc;letter-spacing:0.732px;">function variables:</span><div class="r" style="left:2436px;top:649px;width:500px;height:2px;background:#e0e0e0;"></div><div class="r" style="left:2436px;top:711px;width:500px;height:2px;background:#c6c6c6;box-shadow:0 1px 2px rgba(0,0,0,0.08);"></div><svg class="r" style="left:2447px;top:675.0px;" width="16" height="10" viewBox="0 0 16 10"><path d="M1 1 H15 L8 9z" fill="#616161"/></svg><span id="t63" class="t " style="left:2472.1px;top:670.4px;font-size:22px;line-height:22px;color:#212121;font-weight:700;-webkit-text-stroke:0;letter-spacing:0.249px;">CALLS...</span><svg class="r" style="left:2600px;top:673px;" width="22" height="22" viewBox="0 0 22 22"><rect x="3" y="3" width="5" height="16" fill="#616161"/><rect x="13" y="3" width="5" height="16" fill="#616161"/></svg><svg class="r" style="left:2657px;top:673px;" width="22" height="22" viewBox="0 0 22 22"><rect x="2" y="3" width="16" height="16" fill="#c0c0c0"/></svg><svg class="r" style="left:2711px;top:666px;" width="30" height="38" viewBox="0 0 30 38"><path d="M4 18 A10 10 0 0 1 24 12" fill="none" stroke="#c2c2c2" stroke-width="2.4"/><path d="M19 6 L26 13 L18 15" fill="none" stroke="#c2c2c2" stroke-width="2.4"/><circle cx="13" cy="30" r="3.6" fill="#c2c2c2"/></svg><svg class="r" style="left:2767px;top:666px;" width="26" height="38" viewBox="0 0 26 38"><path d="M13 2 V20 M6 13 L13 20 L20 13" fill="none" stroke="#c2c2c2" stroke-width="2.4"/><circle cx="13" cy="30" r="3.6" fill="#c2c2c2"/></svg><svg class="r" style="left:2824px;top:666px;" width="26" height="38" viewBox="0 0 26 38"><path d="M13 21 V3 M6 10 L13 3 L20 10" fill="none" stroke="#c2c2c2" stroke-width="2.4"/><circle cx="13" cy="30" r="3.6" fill="#c2c2c2"/></svg><svg class="r" style="left:2886px;top:673px;" width="30" height="22" viewBox="0 0 30 22"><path d="M10 3 L3 11 L10 19 M20 3 L27 11 L20 19" fill="none" stroke="#c2c2c2" stroke-width="2.4"/></svg><div class="r" style="left:2436px;top:1012px;width:500px;height:2px;background:#e0e0e0;"></div><div class="r" style="left:2436px;top:1074px;width:500px;height:2px;background:#c6c6c6;box-shadow:0 1px 2px rgba(0,0,0,0.08);"></div><svg class="r" style="left:2447px;top:1038.0px;" width="16" height="10" viewBox="0 0 16 10"><path d="M1 1 H15 L8 9z" fill="#616161"/></svg><span id="t64" class="t " style="left:2471.5px;top:1033.4px;font-size:22px;line-height:22px;color:#212121;font-weight:700;-webkit-text-stroke:0;letter-spacing:0.221px;">BREAKPOINTS</span><svg class="r" style="left:2825px;top:1029px;" width="34" height="32" viewBox="0 0 34 32"><path d="M17 2 L32 30 H2z" fill="none" stroke="#616161" stroke-width="2.4" stroke-linejoin="round"/><path d="M17 11 V22" stroke="#616161" stroke-width="2.4"/><circle cx="17" cy="26" r="1.5" fill="#616161"/></svg><svg class="r" style="left:2885px;top:1030px;" width="30" height="28" viewBox="0 0 30 28"><circle cx="19" cy="11" r="9" fill="#616161" stroke="#fff" stroke-width="1.5"/><circle cx="15" cy="15" r="9" fill="#616161" stroke="#fff" stroke-width="1.5"/><circle cx="11" cy="18" r="9" fill="#616161" stroke="#fff" stroke-width="1.5"/></svg><div class="r" style="left:2436px;top:1376px;width:500px;height:2px;background:#e0e0e0;"></div><div class="r" style="left:2436px;top:1438px;width:500px;height:2px;background:#c6c6c6;box-shadow:0 1px 2px rgba(0,0,0,0.08);"></div><svg class="r" style="left:2447px;top:1402.0px;" width="16" height="10" viewBox="0 0 16 10"><path d="M1 1 H15 L8 9z" fill="#616161"/></svg><span id="t65" class="t " style="left:2472.4px;top:1397.4px;font-size:22px;line-height:22px;color:#212121;font-weight:700;-webkit-text-stroke:0;letter-spacing:-0.726px;">SOURCE</span><svg class="r" style="left:2884px;top:1393px;" width="28" height="30" viewBox="0 0 28 30"><path d="M5 1 H19 L26 8 V26 a3 3 0 0 1 -3 3 H8 a3 3 0 0 1 -3 -3z" fill="#616161"/><rect x="15" y="10" width="8" height="2.6" fill="#fff"/><rect x="15" y="16" width="8" height="2.6" fill="#fff"/><rect x="15" y="22" width="6" height="2.6" fill="#fff"/><path d="M1 16 H12 M9 13 L12 16 L9 19" fill="none" stroke="#fff" stroke-width="2"/><path d="M0 16 H5" stroke="#616161" stroke-width="2"/></svg><div class="r" style="left:2436px;top:1739px;width:500px;height:2px;background:#e0e0e0;"></div><div class="r" style="left:2436px;top:1802px;width:500px;height:2px;background:#c6c6c6;box-shadow:0 1px 2px rgba(0,0,0,0.08);"></div><svg class="r" style="left:2447px;top:1765.5px;" width="16" height="10" viewBox="0 0 16 10"><path d="M1 1 H15 L8 9z" fill="#616161"/></svg><span id="t66" class="t " style="left:2471.5px;top:1760.9px;font-size:22px;line-height:22px;color:#212121;font-weight:700;-webkit-text-stroke:0;letter-spacing:0.336px;">KERNEL SOURCES</span><svg class="r" style="left:2827px;top:1758px;" width="30" height="30" viewBox="0 0 30 30"><circle cx="11" cy="11" r="8.5" fill="none" stroke="#616161" stroke-width="2.6"/><path d="M17 17 L27 27" stroke="#616161" stroke-width="3"/></svg><svg class="r" style="left:2887px;top:1758px;" width="28" height="28" viewBox="0 0 28 28"><path d="M23 15 A10 10 0 1 1 19 6" fill="none" stroke="#616161" stroke-width="2.6"/><path d="M14 2 L25 3 L23 12z" fill="#616161"/></svg><svg class="r" style="left:2444px;top:1812.6px;" width="28" height="30" viewBox="0 0 28 30"><path d="M5 1 H19 L26 8 V26 a3 3 0 0 1 -3 3 H8 a3 3 0 0 1 -3 -3z" fill="#616161"/><rect x="15" y="10" width="8" height="2.6" fill="#fff"/><rect x="15" y="16" width="8" height="2.6" fill="#fff"/><rect x="15" y="22" width="6" height="2.6" fill="#fff"/><path d="M1 16 H12 M9 13 L12 16 L9 19" fill="none" stroke="#fff" stroke-width="2"/><path d="M0 16 H5" stroke="#616161" stroke-width="2"/></svg><span id="t67" class="t " style="left:2474.6px;top:1815.6px;font-size:26px;line-height:26px;color:#212121;letter-spacing:1.153px;">IPython</span><svg class="r" style="left:2444px;top:1860.3px;" width="28" height="30" viewBox="0 0 28 30"><path d="M5 1 H19 L26 8 V26 a3 3 0 0 1 -3 3 H8 a3 3 0 0 1 -3 -3z" fill="#616161"/><rect x="15" y="10" width="8" height="2.6" fill="#fff"/><rect x="15" y="16" width="8" height="2.6" fill="#fff"/><rect x="15" y="22" width="6" height="2.6" fill="#fff"/><path d="M1 16 H12 M9 13 L12 16 L9 19" fill="none" stroke="#fff" stroke-width="2"/><path d="M0 16 H5" stroke="#616161" stroke-width="2"/></svg><span id="t68" class="t " style="left:2474.6px;top:1863.3px;font-size:26px;line-height:26px;color:#212121;letter-spacing:0.870px;">IPython.core</span><svg class="r" style="left:2444px;top:1908.0px;" width="28" height="30" viewBox="0 0 28 30"><path d="M5 1 H19 L26 8 V26 a3 3 0 0 1 -3 3 H8 a3 3 0 0 1 -3 -3z" fill="#616161"/><rect x="15" y="10" width="8" height="2.6" fill="#fff"/><rect x="15" y="16" width="8" height="2.6" fill="#fff"/><rect x="15" y="22" width="6" height="2.6" fill="#fff"/><path d="M1 16 H12 M9 13 L12 16 L9 19" fill="none" stroke="#fff" stroke-width="2"/><path d="M0 16 H5" stroke="#616161" stroke-width="2"/></svg><span id="t69" class="t " style="left:2474.6px;top:1911.0px;font-size:26px;line-height:26px;color:#212121;letter-spacing:0.627px;">IPython.core.alias</span><svg class="r" style="left:2444px;top:1955.6999999999998px;" width="28" height="30" viewBox="0 0 28 30"><path d="M5 1 H19 L26 8 V26 a3 3 0 0 1 -3 3 H8 a3 3 0 0 1 -3 -3z" fill="#616161"/><rect x="15" y="10" width="8" height="2.6" fill="#fff"/><rect x="15" y="16" width="8" height="2.6" fill="#fff"/><rect x="15" y="22" width="6" height="2.6" fill="#fff"/><path d="M1 16 H12 M9 13 L12 16 L9 19" fill="none" stroke="#fff" stroke-width="2"/><path d="M0 16 H5" stroke="#616161" stroke-width="2"/></svg><span id="t70" class="t " style="left:2474.6px;top:1958.7px;font-size:26px;line-height:26px;color:#212121;letter-spacing:0.721px;">IPython.core.application</span><div class="r" style="left:2436px;top:1989px;width:500px;height:6px;background:#fff;"></div><div class="r" style="left:2442px;top:1968px;width:459px;height:21px;background:#efefef;border-radius:10.5px;"></div><div class="r" style="left:2442px;top:1968px;width:230px;height:21px;background:#7a7a7a;border-radius:10.5px;"></div><div class="r" style="left:2908px;top:1810px;width:22px;height:152px;background:#efefef;border-radius:11px;"></div><div class="r" style="left:2908px;top:1810px;width:22px;height:40px;background:#7a7a7a;border-radius:11px;"></div><div class="r" style="left:2937px;top:446px;width:65px;height:1px;background:#bdbdbd;"></div><svg class="r" style="left:2950px;top:268px;" width="40" height="40" viewBox="0 0 40 40"><path d="M16.35 8.75 L18.48 9.04 L18.48 11.76 L16.35 12.05 L15.11 14.21 L15.92 16.20 L13.56 17.56 L12.24 15.86 L9.76 15.86 L8.44 17.56 L6.08 16.20 L6.89 14.21 L5.65 12.05 L3.52 11.76 L3.52 9.04 L5.65 8.75 L6.89 6.59 L6.08 4.60 L8.44 3.24 L9.76 4.94 L12.24 4.94 L13.56 3.24 L15.92 4.60 L15.11 6.59Z" fill="#616161"/><circle cx="11.00" cy="10.40" r="2.60" fill="#eeeeee"/><path d="M33.21 22.80 L36.41 23.29 L36.41 27.51 L33.21 28.00 L31.26 31.38 L32.43 34.40 L28.78 36.51 L26.75 33.98 L22.85 33.98 L20.82 36.51 L17.17 34.40 L18.34 31.38 L16.39 28.00 L13.19 27.51 L13.19 23.29 L16.39 22.80 L18.34 19.42 L17.17 16.40 L20.82 14.29 L22.85 16.82 L26.75 16.82 L28.78 14.29 L32.43 16.40 L31.26 19.42Z" fill="#616161"/><circle cx="24.80" cy="25.40" r="4.20" fill="#eeeeee"/></svg><svg class="r" style="left:2950px;top:376px;" width="40" height="38" viewBox="0 0 40 38"><path d="M5.6 33 A19 19 0 1 1 34.4 33 Z" fill="none" stroke="#616161" stroke-width="3.2" stroke-linejoin="round"/><circle cx="7.78" cy="25.45" r="1.7" fill="#616161"/><circle cx="7.78" cy="16.55" r="1.7" fill="#616161"/><circle cx="12.54" cy="10.35" r="1.7" fill="#616161"/><circle cx="20.00" cy="8.00" r="1.7" fill="#616161"/><circle cx="27.46" cy="10.35" r="1.7" fill="#616161"/><circle cx="32.22" cy="16.55" r="1.7" fill="#616161"/><circle cx="32.22" cy="25.45" r="1.7" fill="#616161"/><path d="M20 21 L31.8 13.5" stroke="#616161" stroke-width="3.2" stroke-linecap="round"/><circle cx="20" cy="21" r="3.4" fill="#616161"/></svg><svg class="r" style="left:2956px;top:484px;" width="31" height="32" viewBox="0 0 31 32"><g transform="scale(1.200)"><path d="M6 1.2 L8.6 4.2 M16 1.2 L13.4 4.2" stroke="#616161" stroke-width="2.8" stroke-linecap="round"/><ellipse cx="11" cy="13.8" rx="8.4" ry="10.4" fill="#616161"/><rect x="0" y="7.2" width="5" height="2.7" fill="#616161"/><rect x="17" y="7.2" width="5" height="2.7" fill="#616161"/><rect x="0" y="12.5" width="5" height="2.7" fill="#616161"/><rect x="17" y="12.5" width="5" height="2.7" fill="#616161"/><rect x="0" y="18.0" width="5" height="2.7" fill="#616161"/><rect x="17" y="18.0" width="5" height="2.7" fill="#616161"/><rect x="7.8" y="9.6" width="6.2" height="2.9" fill="#fff"/><rect x="7.8" y="15.2" width="6.2" height="2.7" fill="#fff"/></g></svg><div class="r" style="left:112px;top:1995px;width:2890px;height:49px;background:#eeeeee;"></div><div class="r" style="left:478px;top:1995px;width:333px;height:49px;background:#bdbdbd;"></div><span id="t71" class="t " style="left:166.8px;top:2007.5px;font-size:26px;line-height:26px;color:#212121;letter-spacing:0.570px;">Simple</span><div class="r" style="left:260px;top:2003px;width:70px;height:32px;background:#bdbdbd;border-radius:16px;"></div><svg class="r" style="left:262px;top:2005px;" width="28" height="28" viewBox="0 0 28 28"><circle cx="14" cy="14" r="11.5" fill="#fff"/></svg><span id="t72" class="t " style="left:380.0px;top:2007.5px;font-size:26px;line-height:26px;color:#212121;">1</span><svg class="r" style="left:414px;top:2004px;" width="30" height="30" viewBox="0 0 30 30"><rect x="6" y="6" width="18" height="18" rx="2" fill="none" stroke="#616161" stroke-width="2.4"/><rect x="11" y="11" width="8" height="8" fill="#616161"/><rect x="10" y="1" width="2.4" height="5" fill="#616161"/><rect x="10" y="24" width="2.4" height="5" fill="#616161"/><rect x="1" y="10" width="5" height="2.4" fill="#616161"/><rect x="24" y="10" width="5" height="2.4" fill="#616161"/><rect x="17" y="1" width="2.4" height="5" fill="#616161"/><rect x="17" y="24" width="2.4" height="5" fill="#616161"/><rect x="1" y="17" width="5" height="2.4" fill="#616161"/><rect x="24" y="17" width="5" height="2.4" fill="#616161"/></svg><span id="t73" class="t " style="left:487.9px;top:2007.5px;font-size:26px;line-height:26px;color:#212121;letter-spacing:0.690px;">Python 3 (ipykernel) | Idle</span><span id="t74" class="t " style="left:829.9px;top:2007.5px;font-size:26px;line-height:26px;color:#212121;letter-spacing:0.603px;">Mem: 156.19 / 2048.00 MB</span><span id="t75" class="t " style="left:2173.4px;top:2007.5px;font-size:26px;line-height:26px;color:#212121;letter-spacing:0.866px;">Mode: Command</span><svg class="r" style="left:2418px;top:2004px;" width="32" height="32" viewBox="0 0 32 32"><path d="M16 2 L28 6 V15 C28 23 22 28 16 30 C10 28 4 23 4 15 V6z" fill="none" stroke="#616161" stroke-width="2.4" stroke-linejoin="round"/><path d="M11 11 L21 21 M21 11 L11 21" stroke="#616161" stroke-width="2.6"/></svg><span id="t76" class="t " style="left:2484.9px;top:2007.5px;font-size:26px;line-height:26px;color:#212121;letter-spacing:-0.235px;">Ln 1, Col 1</span><span id="t77" class="t " style="left:2639.0px;top:2007.5px;font-size:26px;line-height:26px;color:#212121;letter-spacing:0.734px;">12-beispiele.ipynb</span><span id="t78" class="t " style="left:2893.0px;top:2007.5px;font-size:26px;line-height:26px;color:#212121;">0</span><svg class="r" style="left:2928px;top:2003px;" width="36" height="38" viewBox="0 0 36 38"><path d="M18 3 C10 3 7 9 7 16 V24 L3 30 H33 L29 24 V16 C29 9 26 3 18 3z" fill="none" stroke="#616161" stroke-width="2.4" stroke-linejoin="round"/><path d="M14 32 a4 4 0 0 0 8 0" fill="none" stroke="#616161" stroke-width="2.4"/></svg></div></body></html>
